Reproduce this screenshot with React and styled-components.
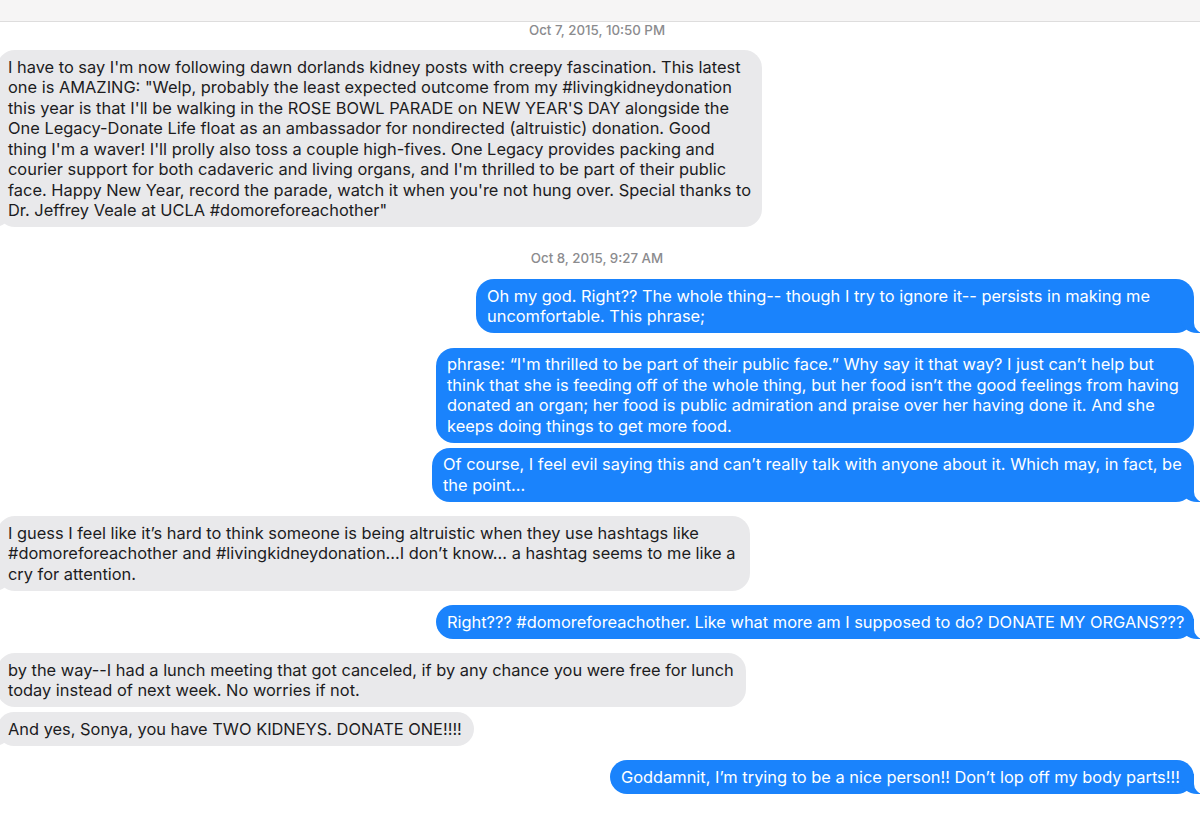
import React from "react";
import styled, { createGlobalStyle, css } from "styled-components";

const GlobalStyle = createGlobalStyle`
  html, body { margin: 0; padding: 0; background: #ffffff; }
  body { font-family: "Inter", "Noto Sans", sans-serif; -webkit-font-smoothing: antialiased; }
`;

const BLUE = "#1a83fc";
const GRAY = "#e9e9eb";

const Page = styled.div`
  width: 1200px;
  height: 831px;
  overflow: hidden;
  background: #ffffff;
`;

const TopBar = styled.div`
  height: 21px;
  background: #f6f5f5;
  border-bottom: 1px solid #dedddd;
`;

const Thread = styled.div`
  padding: 0 6px 0 0;
`;

const Timestamp = styled.div`
  text-align: center;
  font-size: 13.3px;
  line-height: 16px;
  font-weight: 500;
  color: #8b8b8e;
  margin: 23px 0 13px;
  &:first-child { margin-top: 0; margin-bottom: 12px; }
`;

const Row = styled.div`
  display: flex;
  justify-content: ${(p) => (p.$side === "right" ? "flex-end" : "flex-start")};
  margin-bottom: ${(p) => (p.$tail ? "14.5px" : "5px")};
`;

const tailRight = css`
  &::before {
    content: "";
    position: absolute;
    bottom: 0;
    right: -7px;
    width: 20px;
    height: 20px;
    background: ${BLUE};
    border-bottom-left-radius: 16px 14px;
  }
  &::after {
    content: "";
    position: absolute;
    bottom: 0;
    right: -26px;
    width: 26px;
    height: 20px;
    background: #ffffff;
    border-bottom-left-radius: 10px;
  }
`;

const tailLeft = css`
  &::before {
    content: "";
    position: absolute;
    bottom: 0;
    left: -7px;
    width: 20px;
    height: 20px;
    background: ${GRAY};
    border-bottom-right-radius: 16px 14px;
  }
  &::after {
    content: "";
    position: absolute;
    bottom: 0;
    left: -26px;
    width: 26px;
    height: 20px;
    background: #ffffff;
    border-bottom-right-radius: 10px;
  }
`;

const Bubble = styled.div`
  position: relative;
  box-sizing: border-box;
  width: ${(p) => p.$w}px;
  padding: 6.5px 0 6.5px 11px;
  border-radius: 18px;
  font-size: 16.4px;
  line-height: 20.5px;
  background: ${(p) => (p.$side === "right" ? BLUE : GRAY)};
  color: ${(p) => (p.$side === "right" ? "#ffffff" : "#1c1c1e")};
  margin-left: ${(p) => (p.$side === "right" ? "0" : "-3px")};
  ${(p) => p.$tail && (p.$side === "right" ? tailRight : tailLeft)}
`;

const Line = styled.span`
  display: block;
  white-space: nowrap;
  position: relative;
  z-index: 1;
`;

const messages = [
  { type: "time", text: "Oct 7, 2015, 10:50 PM" },
  {
    side: "left",
    tail: true,
    w: 765,
    lines: [
      "I have to say I'm now following dawn dorlands kidney posts with creepy fascination. This latest",
      "one is AMAZING: \"Welp, probably the least expected outcome from my #livingkidneydonation",
      "this year is that I'll be walking in the ROSE BOWL PARADE on NEW YEAR'S DAY alongside the",
      "One Legacy-Donate Life float as an ambassador for nondirected (altruistic) donation. Good",
      "thing I'm a waver! I'll prolly also toss a couple high-fives. One Legacy provides packing and",
      "courier support for both cadaveric and living organs, and I'm thrilled to be part of their public",
      "face. Happy New Year, record the parade, watch it when you're not hung over. Special thanks to",
      "Dr. Jeffrey Veale at UCLA #domoreforeachother\"",
    ],
  },
  { type: "time", text: "Oct 8, 2015, 9:27 AM" },
  {
    side: "right",
    tail: true,
    w: 718,
    lines: [
      "Oh my god. Right?? The whole thing-- though I try to ignore it-- persists in making me",
      "uncomfortable. This phrase;",
    ],
  },
  {
    side: "right",
    tail: false,
    w: 758,
    lines: [
      "phrase: \u201CI'm thrilled to be part of their public face.\u201D Why say it that way? I just can\u2019t help but",
      "think that she is feeding off of the whole thing, but her food isn\u2019t the good feelings from having",
      "donated an organ; her food is public admiration and praise over her having done it. And she",
      "keeps doing things to get more food.",
    ],
  },
  {
    side: "right",
    tail: true,
    w: 762,
    lines: [
      "Of course, I feel evil saying this and can\u2019t really talk with anyone about it. Which may, in fact, be",
      "the point...",
    ],
  },
  {
    side: "left",
    tail: true,
    w: 753,
    lines: [
      "I guess I feel like it\u2019s hard to think someone is being altruistic when they use hashtags like",
      "#domoreforeachother and #livingkidneydonation...I don\u2019t know... a hashtag seems to me like a",
      "cry for attention.",
    ],
  },
  {
    side: "right",
    tail: true,
    w: 758,
    lines: [
      "Right??? #domoreforeachother. Like what more am I supposed to do? DONATE MY ORGANS???",
    ],
  },
  {
    side: "left",
    tail: false,
    w: 749,
    lines: [
      "by the way--I had a lunch meeting that got canceled, if by any chance you were free for lunch",
      "today instead of next week. No worries if not.",
    ],
  },
  {
    side: "left",
    tail: true,
    w: 477,
    lines: ["And yes, Sonya, you have TWO KIDNEYS. DONATE ONE!!!!"],
  },
  {
    side: "right",
    tail: true,
    w: 584,
    lines: [
      "Goddamnit, I\u2019m trying to be a nice person!! Don\u2019t lop off my body parts!!!",
    ],
  },
];

export default function App() {
  return (
    <Page>
      <GlobalStyle />
      <TopBar />
      <Thread>
        {messages.map((m, i) =>
          m.type === "time" ? (
            <Timestamp key={i}>{m.text}</Timestamp>
          ) : (
            <Row key={i} $side={m.side} $tail={m.tail}>
              <Bubble $side={m.side} $tail={m.tail} $w={m.w}>
                {m.lines.map((l, j) => (
                  <Line key={j}>{l}</Line>
                ))}
              </Bubble>
            </Row>
          )
        )}
      </Thread>
    </Page>
  );
}
